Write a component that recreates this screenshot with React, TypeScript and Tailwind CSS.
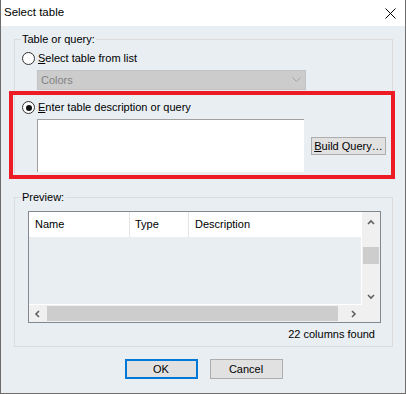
import type { ReactNode } from "react";

function Radio({ checked }: { checked?: boolean }) {
  return (
    <span className="flex h-[13px] w-[13px] shrink-0 items-center justify-center rounded-full border border-[#333333] bg-white">
      {checked && <span className="h-[6px] w-[6px] rounded-full bg-[#111111]" />}
    </span>
  );
}

function Chevron({ dir, color = "#606060" }: { dir: "up" | "down" | "left" | "right"; color?: string }) {
  const pts = {
    up: "1,5 4,2 7,5",
    down: "1,2 4,5 7,2",
    left: "5,1 2,4 5,7",
    right: "2,1 5,4 2,7",
  }[dir];
  const horiz = dir === "up" || dir === "down";
  return (
    <svg width={horiz ? 8 : 7} height={horiz ? 7 : 8} viewBox={horiz ? "0 0 8 7" : "0 0 7 8"}>
      <polyline points={pts} fill="none" stroke={color} strokeWidth="1.6" />
    </svg>
  );
}

function GroupBox({ label, className, children }: { label: string; className?: string; children: ReactNode }) {
  return (
    <fieldset className={`border border-[#dcdcdc] ${className ?? ""}`}>
      <legend className="ml-[6px] px-[1px] leading-[15px]">{label}</legend>
      {children}
    </fieldset>
  );
}

export default function App() {
  return (
    <div className="relative flex h-[394px] w-[406px] flex-col border-x border-b border-[#6d6d6d] bg-[#e8eef2] font-['Liberation_Sans',Arial,sans-serif] text-[11px] text-black">
      {/* title bar */}
      <div className="flex h-[26px] shrink-0 items-center justify-between bg-white pl-[3px] pr-[9px]">
        <span className="text-[11.5px]">Select table</span>
        <svg width="11" height="11" viewBox="0 0 11 11">
          <path d="M0.5 0.5 L10.5 10.5 M10.5 0.5 L0.5 10.5" stroke="#000" strokeWidth="1" />
        </svg>
      </div>

      <div className="flex flex-1 flex-col pl-[13px] pr-[12px]">
        <GroupBox label="Table or query:" className="mt-[6px] pb-[4px]">
          <label className="mt-[5px] flex h-[13px] items-center gap-[3px] pl-[7px]">
            <Radio />
            <span>
              <u>S</u>elect table from list
            </span>
          </label>
          <div className="ml-[22px] mt-[5px] flex h-[20px] w-[269px] items-center justify-between border border-[#c2c2c2] bg-[#cccccc] pl-[3px] pr-[4px] text-[#838383]">
            <span>Colors</span>
            <svg width="9" height="6" viewBox="0 0 9 6">
              <polyline points="0.5,0.5 4.5,4.5 8.5,0.5" fill="none" stroke="#a2a2a2" strokeWidth="1" />
            </svg>
          </div>
          <label className="mt-[11px] flex h-[13px] items-center gap-[3px] pl-[7px]">
            <Radio checked />
            <span>
              <u>E</u>nter table description or query
            </span>
          </label>
          <div className="mt-[5px] flex items-center pl-[22px]">
            <textarea className="block h-[53px] w-[267px] resize-none border-l border-t border-[#a0a0a0] bg-white outline-none" />
            <button className="ml-[7px] h-[18px] w-[75px] border border-[#adadad] bg-[#e1e1e1]">
              <u>B</u>uild Query…
            </button>
          </div>
        </GroupBox>

        <GroupBox label="Preview:" className="mt-[13px] pb-[5px]">
          <div className="ml-[13px] mt-[6px] flex h-[112px] w-[353px] flex-col border border-[#828790]">
            <div className="flex h-[93px]">
              <div className="flex w-[333px] flex-col">
                <div className="flex h-[25px] items-center bg-white">
                  <div className="flex h-full w-[101px] items-center border-r border-[#e5e5e5] pl-[6px]">Name</div>
                  <div className="flex h-full w-[59px] items-center border-r border-[#e5e5e5] pl-[5px]">Type</div>
                  <div className="flex h-full items-center pl-[6px]">Description</div>
                </div>
                <div className="flex-1 border-b border-r border-white" />
              </div>
              <div className="flex flex-1 flex-col bg-[#f0f0f0]">
                <div className="flex h-[17px] items-center justify-center pt-[3px]">
                  <Chevron dir="up" />
                </div>
                <div className="flex-1 px-[1px]">
                  <div className="mt-[18px] h-[17px] bg-[#cdcdcd]" />
                </div>
                <div className="flex h-[17px] items-center justify-center">
                  <Chevron dir="down" />
                </div>
              </div>
            </div>
            <div className="flex h-[17px] bg-[#f0f0f0]">
              <div className="flex w-[333px]">
                <div className="flex w-[17px] items-center justify-center">
                  <Chevron dir="left" />
                </div>
                <div className="flex-1 py-[1px]">
                  <div className="ml-[1px] h-full w-[291px] bg-[#cdcdcd]" />
                </div>
                <div className="flex w-[17px] items-center justify-center">
                  <Chevron dir="right" />
                </div>
              </div>
            </div>
          </div>
          <div className="mt-[4px] pr-[17px] text-right leading-[14px]">22 columns found</div>
        </GroupBox>

        <div className="mt-[12px] flex justify-center gap-[12px]">
          <button className="h-[20px] w-[73px] border-2 border-[#0078d7] bg-[#e1e1e1]">OK</button>
          <button className="h-[20px] w-[73px] border border-[#adadad] bg-[#e1e1e1]">Cancel</button>
        </div>
      </div>

      {/* highlight annotation */}
      <div className="pointer-events-none absolute left-[8px] top-[91px] h-[88px] w-[386px] border-4 border-[#ed1c24]" />
    </div>
  );
}
